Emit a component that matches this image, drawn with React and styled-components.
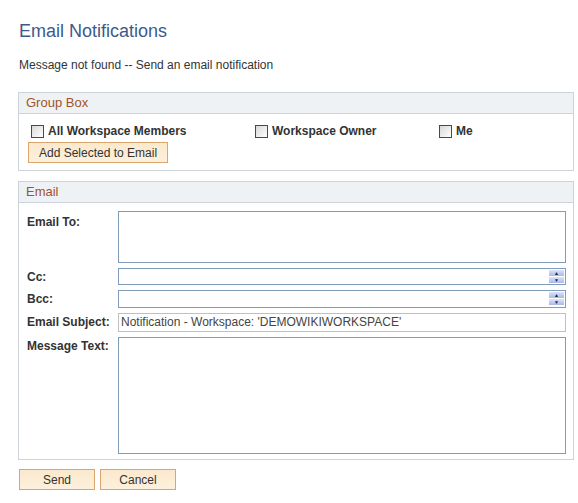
import styled, { createGlobalStyle } from "styled-components";

const Global = createGlobalStyle`
  body { margin: 0; background: #fff; font-family: "Liberation Sans", Arial, sans-serif; font-size: 12px; color: #333; }
`;

const Page = styled.div`
  padding: 19px 4px 0 18px;
  width: 556px;
`;

const Title = styled.h1`
  margin: 0 0 0 1px;
  font-size: 18px;
  font-weight: normal;
  color: #3c5a8c;
  line-height: 24px;
`;

const Message = styled.div`
  margin: 15px 0 20px 1px;
  font-size: 12px;
  line-height: 14px;
`;

const Box = styled.div`
  border: 1px solid #cdd3d8;
  margin-bottom: 10px;
`;

const BoxHeader = styled.div`
  background: #eef2f4;
  border-bottom: 1px solid #cdd3d8;
  color: #a0522d;
  font-size: 13px;
  height: 20px;
  line-height: 20px;
  padding-left: 7px;
`;

const CheckRow = styled.div`
  display: grid;
  grid-template-columns: 224px 184px 1fr;
  padding: 10px 0 0 12px;
`;

const Check = styled.label`
  display: flex;
  align-items: center;
  gap: 4px;
  font-weight: bold;
  color: #333;
`;

const Box12 = styled.span`
  width: 11px;
  height: 11px;
  border: 1px solid #2f4f6f;
  background: linear-gradient(135deg, #d8d8d8, #fff);
`;

const Button = styled.button`
  font-family: inherit;
  font-size: 12px;
  color: #333;
  height: 21px;
  width: ${(p) => p.w || "auto"};
  padding: 0 10px;
  background: linear-gradient(#fbe9cd, #fdf0dc);
  border: 1px solid #dca56e;
  border-radius: 0;
`;

const GroupBody = styled.div`
  padding-bottom: 7px;
`;

const AddWrap = styled.div`
  padding: 4px 0 0 9px;
`;

const Form = styled.div`
  display: grid;
  grid-template-columns: 91px 448px;
  row-gap: 5px;
  padding: 8px 0 5px 8px;
`;

const Label = styled.div`
  font-weight: bold;
  padding-top: ${(p) => p.pt || 2}px;
`;

const Field = styled.div`
  height: ${(p) => p.h}px;
  border: 1px solid ${(p) => (p.grey ? "#c0c0c0" : "#7f9db9")};
  box-sizing: border-box;
  position: relative;
  padding: 1px 2px;
  line-height: 15px;
  color: #444;
`;

const Spin = styled.div`
  position: absolute;
  right: 1px;
  top: 1px;
  display: flex;
  flex-direction: column;
  gap: 1px;
`;

const SpinBtn = styled.div`
  width: 15px;
  height: 6px;
  background: linear-gradient(#dbe4fa, #a8b9ea);
  font-size: 5px;
  line-height: 6px;
  text-align: center;
  color: #223;
`;

const Footer = styled.div`
  display: flex;
  gap: 5px;
  padding: 0 0 0 1px;
  margin-top: -1px;
`;

const Spinner = () => (
  <Spin>
    <SpinBtn>▲</SpinBtn>
    <SpinBtn>▼</SpinBtn>
  </Spin>
);

export default function App() {
  return (
    <Page>
      <Global />
      <Title>Email Notifications</Title>
      <Message>Message not found -- Send an email notification</Message>
      <Box>
        <BoxHeader>Group Box</BoxHeader>
        <GroupBody>
          <CheckRow>
            <Check><Box12 />All Workspace Members</Check>
            <Check><Box12 />Workspace Owner</Check>
            <Check><Box12 />Me</Check>
          </CheckRow>
          <AddWrap>
            <Button>Add Selected to Email</Button>
          </AddWrap>
        </GroupBody>
      </Box>
      <Box>
        <BoxHeader>Email</BoxHeader>
        <Form>
          <Label pt={4}>Email To:</Label>
          <Field h={52} />
          <Label>Cc:</Label>
          <Field h={17}><Spinner /></Field>
          <Label>Bcc:</Label>
          <Field h={18}><Spinner /></Field>
          <Label>Email Subject:</Label>
          <Field h={19} grey>Notification - Workspace: 'DEMOWIKIWORKSPACE'</Field>
          <Label>Message Text:</Label>
          <Field h={117} />
        </Form>
      </Box>
      <Footer>
        <Button w="76px">Send</Button>
        <Button w="76px">Cancel</Button>
      </Footer>
    </Page>
  );
}
